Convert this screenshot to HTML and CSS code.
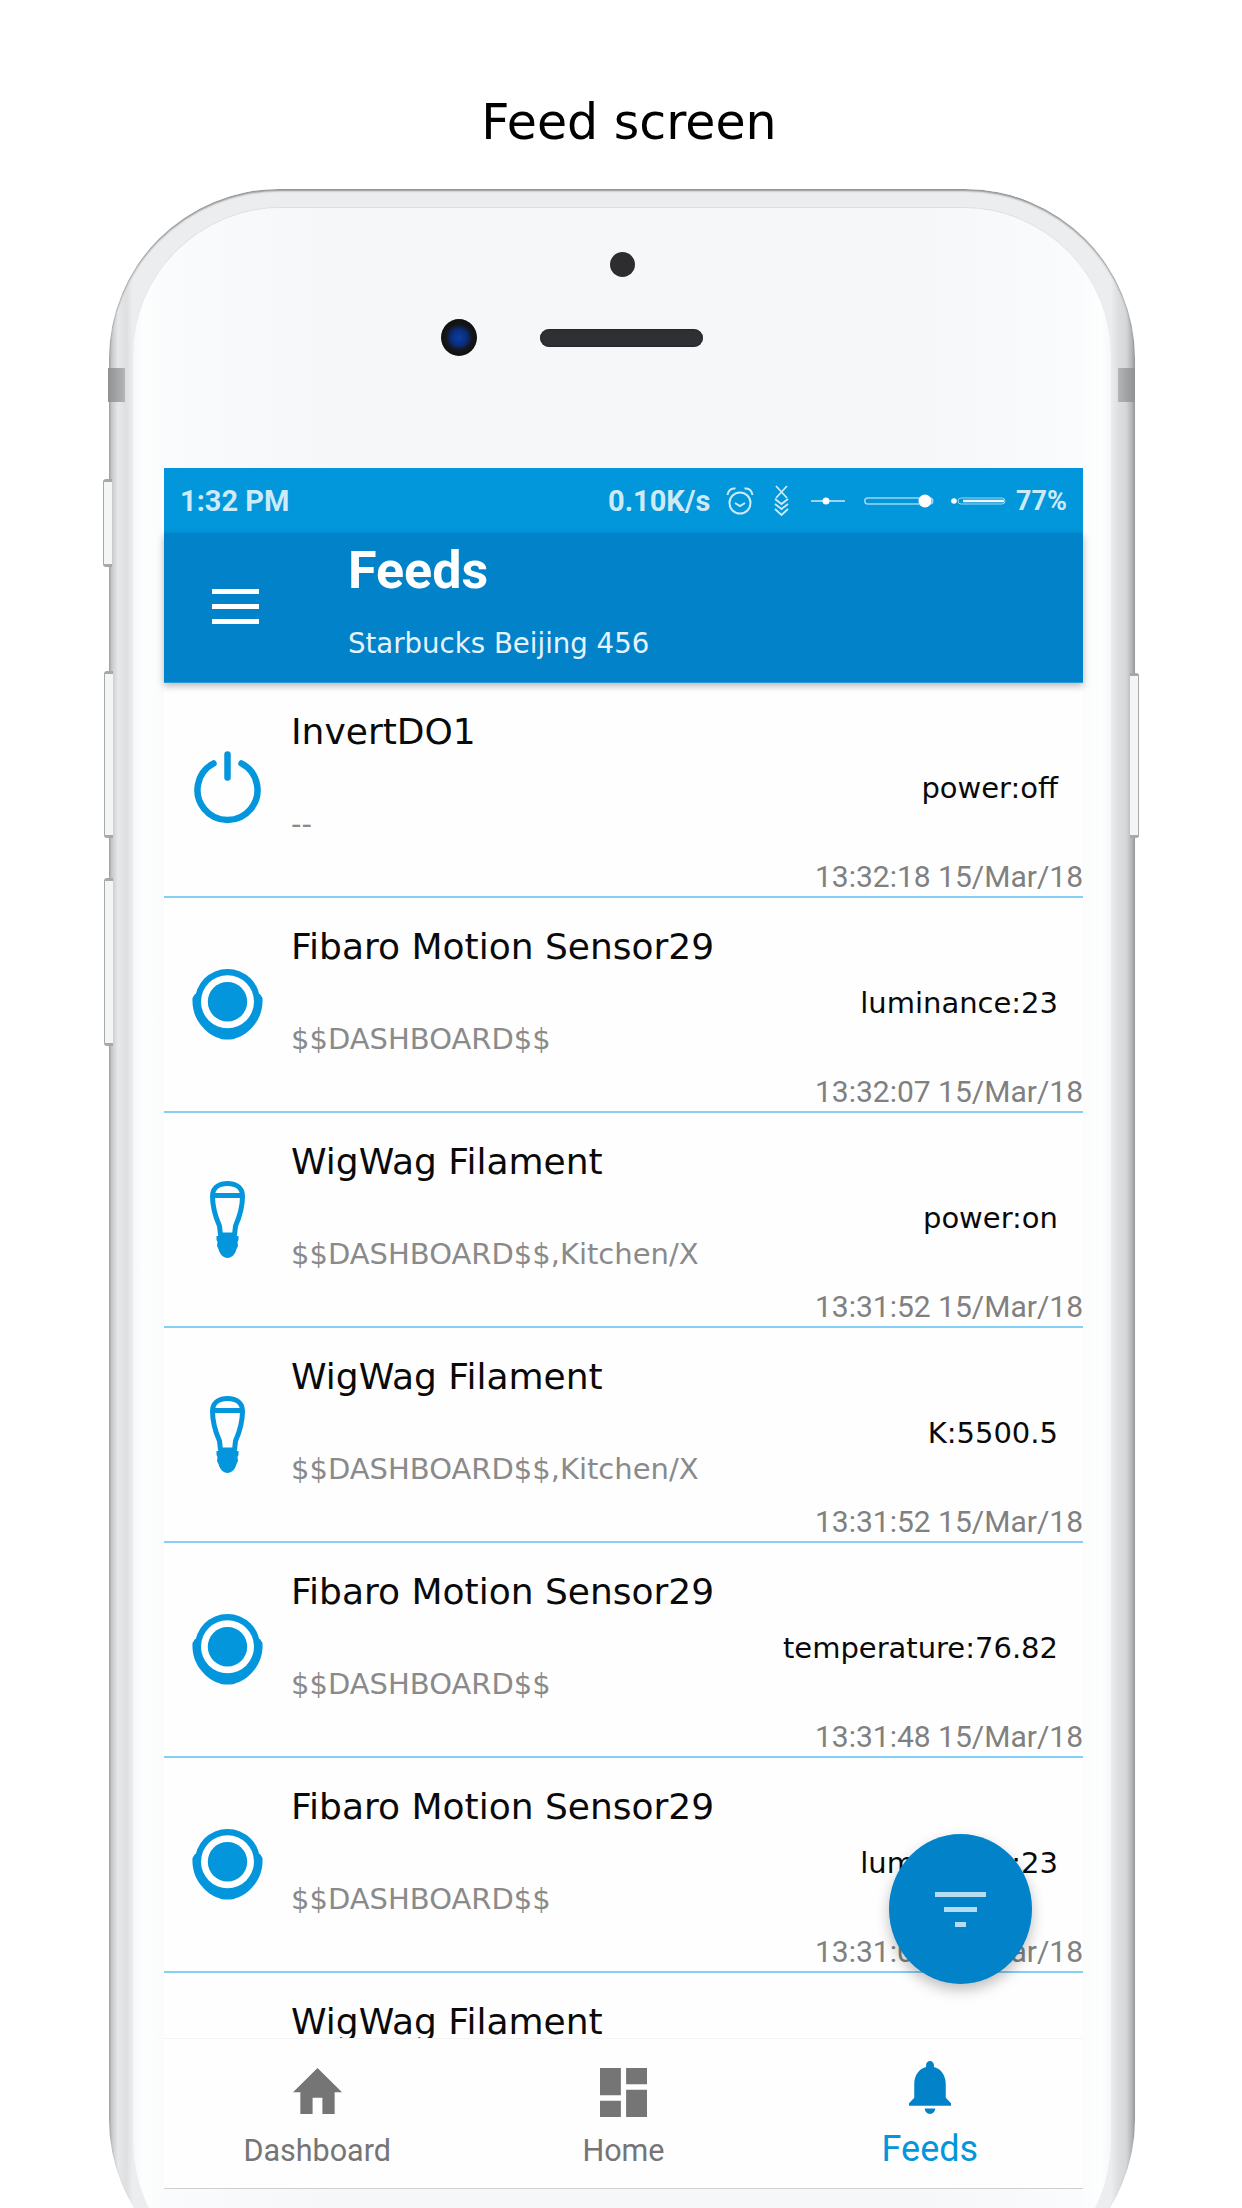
FILE: index.html
```html
<!DOCTYPE html>
<html lang="en">
<head>
<meta charset="utf-8">
<title>Feed screen</title>
<link rel="stylesheet" href="styles.css">
</head>
<body>
<svg class="defs" width="0" height="0" aria-hidden="true">
  <symbol id="i-sensor" viewBox="0 0 71 71">
    <path fill="#0396dc" d="M3 25 L0.500 29 C0 38 2 47 8 55 C14 63 22 68 27 69 C29 71 42 71 44 69 C49 68 57 63 63 55 C69 47 71 38 70.500 29 L68 25 Z"/>
    <circle cx="35.500" cy="32.700" r="32.700" fill="#0396dc"/>
    <circle cx="35.500" cy="32.700" r="26.500" fill="#fff"/>
    <circle cx="35.500" cy="32.700" r="19.700" fill="#0396dc"/>
  </symbol>
  <symbol id="i-bulb" viewBox="0 0 35 77">
    <path fill="none" stroke="#0396dc" stroke-width="5" stroke-linejoin="round" d="M2.500 15 C2.500 5 11 2.500 17.500 2.500 C24 2.500 32.500 5 32.500 15 C32.500 27 29.500 36 25.500 45 L24.500 54 L10.500 54 L9.500 45 C5.500 36 2.500 27 2.500 15 Z M2.500 14.500 H32.500"/>
    <path fill="#0396dc" d="M6.500 55 H28.500 L28.500 59 L27.500 61 L28 65 L26.500 68 C25.500 73 21.500 77 17.500 77 C13.500 77 9.500 73 8.500 68 L7 65 L7.500 61 L6.500 59 Z"/>
  </symbol>
  <symbol id="i-power" viewBox="0 0 67 77">
    <path fill="none" stroke="#0396dc" stroke-width="6.500" stroke-linecap="round" d="M19.500 12.500 A30 30 0 1 0 47.500 12.500 M33.500 3.500 V26.500"/>
  </symbol>
</svg>

<main class="page">
  <h1 class="caption">Feed screen</h1>

  <div class="phone">
    <span class="band band-left"></span>
    <span class="band band-right"></span>
    <span class="key key-mute"></span>
    <span class="key key-up"></span>
    <span class="key key-down"></span>
    <span class="key key-power"></span>

    <div class="rim">
      <div class="face">
        <div class="sensors">
          <span class="front-dot"></span>
          <div class="lens-row">
            <span class="lens"></span>
            <span class="speaker"></span>
          </div>
        </div>

        <section class="screen">
          <div class="status">
            <span class="clock">1:32 PM</span>
            <div class="status-right">
              <span class="speed">0.10K/s</span>
              <svg class="s-alarm" viewBox="0 0 28 28"><g fill="none" stroke="#cdeaf8" stroke-width="2"><circle cx="14" cy="16" r="10.500"/><path d="M9 16l5 3 5-3M1.500 8 C2 3 6 1 9.500 1.500 M26.500 8 C26 3 22 1 18.500 1.500"/></g></svg>
              <svg class="s-chev" viewBox="0 0 15 32"><g fill="none" stroke="#cdeaf8" stroke-width="1.800"><path d="M2 1l11 12M13 1L2 13M1 14l6.500 5 6.500-5M1 19l6.500 5 6.500-5M1 24l6.500 6 6.500-6"/></g></svg>
              <svg class="s-slider-a" viewBox="0 0 34 12"><path d="M0 6H34" stroke="#cdeaf8" stroke-width="1.500"/><circle cx="15" cy="6" r="3.500" fill="#fff"/></svg>
              <svg class="s-slider-b" viewBox="0 0 70 14"><rect x="0.750" y="4" width="68" height="6" rx="3" fill="none" stroke="#9dd6f2" stroke-width="1.500"/><circle cx="61" cy="7" r="6.500" fill="#fff"/></svg>
              <svg class="s-slider-c" viewBox="0 0 55 10"><circle cx="3" cy="5" r="2.800" fill="#fff"/><rect x="7" y="2" width="47" height="6" rx="3" fill="none" stroke="#9dd6f2" stroke-width="1"/><path d="M12 5H53" stroke="#eaf6fc" stroke-width="2.400"/></svg>
              <span class="battery">77%</span>
            </div>
          </div>

          <header class="appbar">
            <div class="menu"><span></span><span></span><span></span></div>
            <div class="heading">
              <span class="heading-title">Feeds</span>
              <span class="heading-sub">Starbucks Beijing 456</span>
            </div>
          </header>

          <div class="list">
            <article class="row">
              <div class="row-icon"><svg class="ic-power"><use href="#i-power"/></svg></div>
              <div class="row-main"><h2 class="row-title">InvertDO1</h2><p class="row-sub">--</p></div>
              <div class="row-side"><span class="row-value">power:off</span><time class="row-time">13:32:18 15/Mar/18</time></div>
            </article>
            <article class="row">
              <div class="row-icon"><svg class="ic-sensor"><use href="#i-sensor"/></svg></div>
              <div class="row-main"><h2 class="row-title">Fibaro Motion Sensor29</h2><p class="row-sub">$$DASHBOARD$$</p></div>
              <div class="row-side"><span class="row-value">luminance:23</span><time class="row-time">13:32:07 15/Mar/18</time></div>
            </article>
            <article class="row">
              <div class="row-icon"><svg class="ic-bulb"><use href="#i-bulb"/></svg></div>
              <div class="row-main"><h2 class="row-title">WigWag Filament</h2><p class="row-sub">$$DASHBOARD$$,Kitchen/X</p></div>
              <div class="row-side"><span class="row-value">power:on</span><time class="row-time">13:31:52 15/Mar/18</time></div>
            </article>
            <article class="row">
              <div class="row-icon"><svg class="ic-bulb"><use href="#i-bulb"/></svg></div>
              <div class="row-main"><h2 class="row-title">WigWag Filament</h2><p class="row-sub">$$DASHBOARD$$,Kitchen/X</p></div>
              <div class="row-side"><span class="row-value">K:5500.5</span><time class="row-time">13:31:52 15/Mar/18</time></div>
            </article>
            <article class="row">
              <div class="row-icon"><svg class="ic-sensor"><use href="#i-sensor"/></svg></div>
              <div class="row-main"><h2 class="row-title">Fibaro Motion Sensor29</h2><p class="row-sub">$$DASHBOARD$$</p></div>
              <div class="row-side"><span class="row-value">temperature:76.82</span><time class="row-time">13:31:48 15/Mar/18</time></div>
            </article>
            <article class="row">
              <div class="row-icon"><svg class="ic-sensor"><use href="#i-sensor"/></svg></div>
              <div class="row-main"><h2 class="row-title">Fibaro Motion Sensor29</h2><p class="row-sub">$$DASHBOARD$$</p></div>
              <div class="row-side"><span class="row-value">luminance:23</span><time class="row-time">13:31:07 15/Mar/18</time></div>
            </article>
            <article class="row">
              <div class="row-icon"></div>
              <div class="row-main"><h2 class="row-title">WigWag Filament</h2></div>
            </article>
          </div>

          <button class="fab" type="button" aria-label="Filter">
            <span class="fab-line fab-l1"></span>
            <span class="fab-line fab-l2"></span>
            <span class="fab-line fab-l3"></span>
          </button>

          <nav class="tabs">
            <div class="tab">
              <svg class="tab-home" viewBox="2 3 20 17" preserveAspectRatio="none"><path fill="#757575" d="M10 20v-6h4v6h5v-8h3L12 3 2 12h3v8z"/></svg>
              <span class="tab-label">Dashboard</span>
            </div>
            <div class="tab">
              <svg class="tab-dash" viewBox="3 3 18 18" preserveAspectRatio="none"><path fill="#757575" d="M3 13h8V3H3v10zm0 8h8v-6H3v6zm10 0h8V11h-8v10zm0-18v6h8V3h-8z"/></svg>
              <span class="tab-label">Home</span>
            </div>
            <div class="tab tab-active">
              <svg class="tab-bell" viewBox="4 2.500 16 19.500" preserveAspectRatio="none"><path fill="#0282c9" d="M12 22c1.100 0 2-.9 2-2h-4c0 1.100.9 2 2 2zm6-6v-5c0-3.070-1.630-5.640-4.500-6.320V4c0-.83-.67-1.500-1.500-1.500s-1.500.67-1.500 1.500v.68C7.640 5.360 6 7.920 6 11v5l-2 2v1h16v-1l-2-2z"/></svg>
              <span class="tab-label tab-label-active">Feeds</span>
            </div>
          </nav>
        </section>
      </div>
    </div>
  </div>
</main>
</body>
</html>
```
FILE: styles.css
```css
* { box-sizing: border-box; }

html, body {
  margin: 0;
  padding: 0;
  background: #fff;
}

.defs { position: absolute; }

.page {
  width: 1242px;
  height: 2208px;
  overflow: hidden;
}

.caption {
  margin: 0;
  height: 189px;
  padding-top: 93px;
  padding-left: 16px;
  text-align: center;
  font: 400 49px/60px "DejaVu Sans", sans-serif;
  color: #000;
}

.phone {
  position: relative;
  width: 1026px;
  height: 2100px;
  margin-left: 109px;
}

.rim {
  height: 100%;
  padding: 19px 24px 0;
  border-radius: 170px;
  background: #e3e4e5;
  background-image: linear-gradient(90deg, #a4a6a8 0, #c9cacb 3px, #e7e8e9 9px, #dedfe0 17px, #ecedee 24px, #ecedee 1002px, #dedfe0 1009px, #d6d7d8 1017px, #b2b4b6 1023px, #97999b 1026px);
  box-shadow: inset 0 2px 2px #8f9193;
}

.face {
  height: 100%;
  padding: 9px 0 0;
  border-radius: 148px;
  background: linear-gradient(90deg, #f6f7f8 0, #fdfefe 10px, #fafbfc 31px, #f6f7f9 200px, #f6f7f9 780px, #fafbfc 947px, #fdfefe 968px, #f6f7f8 978px);
  box-shadow: 0 -1px 0 #dcdee0;
}

.band {
  position: absolute;
  z-index: 2;
  top: 179px;
  width: 17px;
  height: 34px;
}

.band-left {
  left: -1px;
  background: linear-gradient(90deg, #8f9193, #b3b5b7);
}

.band-right {
  right: 0;
  background: linear-gradient(90deg, #b3b5b7, #8f9193);
}

.key {
  position: absolute;
  z-index: 1;
  width: 9px;
  background: #f4f5f5;
  border: 1px solid #a6a8aa;
  border-width: 3px 0 3px 1px;
  border-radius: 3px 0 0 3px;
}

.key-mute { left: -6px; top: 290px; height: 88px; }
.key-up { left: -5px; top: 482px; height: 167px; }
.key-down { left: -5px; top: 689px; height: 168px; }

.key-power {
  right: -4px;
  top: 484px;
  height: 165px;
  border-width: 3px 1px 3px 0;
  border-radius: 0 3px 3px 0;
}

.sensors {
  height: 251px;
  display: flex;
  flex-direction: column;
  align-items: center;
  padding-top: 35px;
}

.front-dot {
  width: 25px;
  height: 25px;
  border-radius: 50%;
  background: #2d2d2f;
}

.lens-row {
  display: flex;
  align-items: center;
  gap: 63px;
  margin-top: 42px;
  margin-left: -100px;
}

.lens {
  width: 36px;
  height: 37px;
  border-radius: 50%;
  background: radial-gradient(circle at 50% 50%, #0c3ea3 0, #0a2c7c 8px, #15161b 13px, #111 18px);
}

.speaker {
  width: 163px;
  height: 18px;
  border-radius: 9px;
  background: #2f3033;
  box-shadow: inset 0 0 2px #111;
}

.screen {
  position: relative;
  width: 919px;
  height: 1721px;
  margin-left: 31px;
  display: flex;
  flex-direction: column;
  background: #fefefe;
}

.status {
  height: 65px;
  flex: none;
  display: flex;
  align-items: center;
  justify-content: space-between;
  padding: 0 19px 0 16px;
  background: #0296db;
  font: 700 29px/34px Roboto, sans-serif;
  color: #cdeaf8;
}

.status-right {
  display: flex;
  align-items: center;
}

.speed { width: 104px; }

.s-alarm { width: 28px; height: 28px; margin-left: 14px; }
.s-chev { width: 15px; height: 32px; margin-left: 20px; }
.s-slider-a { width: 34px; height: 12px; margin-left: 22px; }
.s-slider-b { width: 70px; height: 14px; margin-left: 19px; }
.s-slider-c { width: 55px; height: 10px; margin-left: 17px; }
.battery { margin-left: 10px; width: 48px; font-size: 27px; white-space: nowrap; }

.appbar {
  position: relative;
  z-index: 2;
  height: 150px;
  flex: none;
  display: flex;
  background: #0282c9;
  border-bottom: 1px solid #2a9ad8;
  box-shadow: 0 3px 7px rgba(0, 0, 0, 0.28);
}

.menu {
  width: 184px;
  flex: none;
  display: flex;
  flex-direction: column;
  gap: 10px;
  padding: 56px 0 0 48px;
}

.menu span {
  display: block;
  width: 47px;
  height: 5px;
  background: #fff;
}

.heading {
  display: flex;
  flex-direction: column;
  padding-top: 10px;
  color: #fff;
}

.heading-title {
  font: 700 52px/56px Roboto, sans-serif;
}

.heading-sub {
  margin-top: 25px;
  font: 400 27.600px/40px "DejaVu Sans", sans-serif;
  color: #e6f3fb;
}

.list {
  flex: 1;
  min-height: 0;
  overflow: hidden;
}

.row {
  height: 215px;
  display: flex;
  border-bottom: 2px solid #84cff5;
}

.row-icon {
  width: 127px;
  flex: none;
  display: flex;
  justify-content: center;
  padding-top: 68px;
  align-items: flex-start;
}

.ic-power { width: 67px; height: 77px; }
.ic-sensor { width: 71px; height: 71px; margin-top: 3px; }
.ic-bulb { width: 35px; height: 77px; }

.row-main {
  flex: 1;
  min-width: 0;
  padding-top: 24px;
}

.row-title {
  margin: 0;
  font: 400 36px/50px "DejaVu Sans", sans-serif;
  color: #0a0a0a;
}

.row-sub {
  margin: 47px 0 0;
  font: 400 29px/40px "DejaVu Sans", sans-serif;
  color: #8a8a8a;
}

.row-side {
  flex: none;
  display: flex;
  flex-direction: column;
  align-items: flex-end;
  padding-top: 85px;
}

.row-value {
  padding-right: 25px;
  font: 400 29px/40px "DejaVu Sans", sans-serif;
  color: #0a0a0a;
}

.row-time {
  margin-top: 51px;
  font: 400 30px/36px Roboto, sans-serif;
  color: #808080;
  white-space: nowrap;
}

.fab {
  position: absolute;
  z-index: 3;
  left: 725px;
  top: 1366px;
  width: 143px;
  height: 150px;
  padding: 58px 0 0;
  border: 0;
  border-radius: 50%;
  background: #0282c9;
  box-shadow: 0 6px 14px rgba(0, 0, 0, 0.25);
  display: flex;
  flex-direction: column;
  align-items: center;
  gap: 10px;
}

.fab-line {
  display: block;
  height: 5px;
  background: #b5dcf1;
}

.fab-l1 { width: 51px; }
.fab-l2 { width: 33px; }
.fab-l3 { width: 11px; }

.tabs {
  position: relative;
  z-index: 2;
  height: 151px;
  flex: none;
  display: grid;
  grid-template-columns: repeat(3, 1fr);
  background: #fefefe;
  border-top: 1px solid #f3f3f3;
  border-bottom: 1px solid #cfcfcf;
}

.tab {
  display: flex;
  flex-direction: column;
  align-items: center;
  padding-top: 29px;
}

.tab-home { width: 49px; height: 46px; }
.tab-dash { width: 47px; height: 49px; }
.tab-bell { width: 42px; height: 53px; margin-top: -7px; }

.tab-label {
  margin-top: 19px;
  font: 400 30.500px/36px Roboto, sans-serif;
  color: #757575;
}

.tab-dash + .tab-label { margin-top: 16px; }
.tab-bell + .tab-label { margin-top: 17px; }

.tab-label-active {
  font-size: 36px;
  color: #0396dc;
}
```
